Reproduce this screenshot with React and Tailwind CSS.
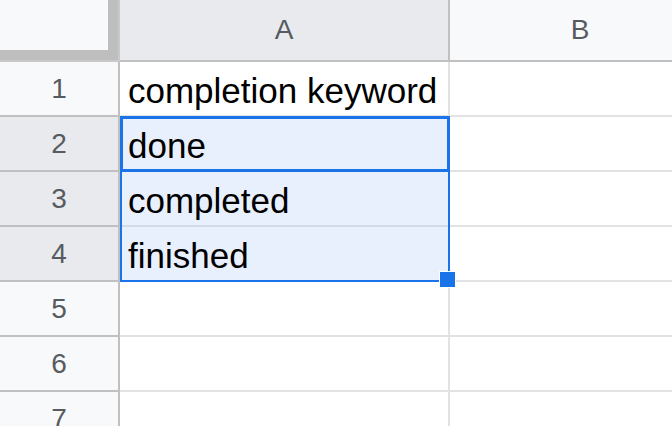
import React from "react";

const rows = [
  { n: 1, a: "completion keyword" },
  { n: 2, a: "done", sel: true },
  { n: 3, a: "completed", sel: true },
  { n: 4, a: "finished", sel: true },
  { n: 5 },
  { n: 6 },
  { n: 7 },
];

function HeaderRow() {
  return (
    <div className="flex h-[62px] shrink-0">
      {/* top-left corner with the freeze handles */}
      <div className="w-[120px] shrink-0 border-r-2 border-b-2 border-[#c9c9c9] bg-[#bebebe]">
        <div className="w-[108px] h-[50px] bg-[#f8f9fa]" />
      </div>
      <div className="w-[330px] shrink-0 border-r-2 border-b-2 border-[#c0c0c0] bg-[#e8eaed] flex items-center justify-center text-[28px] text-[#575b60]">
        A
      </div>
      <div className="w-[260px] shrink-0 border-b-2 border-[#c0c0c0] bg-[#f8f9fa] flex items-center justify-center text-[28px] text-[#575b60]">
        B
      </div>
    </div>
  );
}

function Row({ n, a, sel }) {
  return (
    <div className="flex h-[55px] shrink-0">
      <div
        className={
          sel
            ? "w-[120px] shrink-0 border-r-2 border-b-2 border-[#c0c0c0] bg-[#e8eaed] flex items-center justify-center text-[28px] text-[#575b60]"
            : "w-[120px] shrink-0 border-r-2 border-b-2 border-[#c0c0c0] bg-[#f8f9fa] flex items-center justify-center text-[28px] text-[#575b60]"
        }
      >
        {n}
      </div>
      <div
        className={
          sel
            ? "w-[330px] shrink-0 border-r-2 border-b-2 border-[#d3dae6] bg-[#e8f0fe] flex items-center pl-2 pt-1 text-[35px] text-black"
            : "w-[330px] shrink-0 border-r-2 border-b-2 border-[#e2e2e2] bg-white flex items-center pl-2 pt-1 text-[35px] text-black"
        }
      >
        {a}
      </div>
      <div className="w-[260px] shrink-0 border-b-2 border-[#e2e2e2] bg-white" />
    </div>
  );
}

export default function App() {
  return (
    <div className="relative w-[672px] h-[426px] overflow-hidden bg-white font-['Liberation_Sans',Arial,sans-serif] leading-none">
      <HeaderRow />
      {rows.map((r) => (
        <Row key={r.n} {...r} />
      ))}

      {/* selected range A2:A4 */}
      <div className="absolute left-[120px] top-[116px] w-[330px] h-[166px] border-2 border-[#1a73e8]" />
      {/* active cell A2 */}
      <div className="absolute left-[120px] top-[116px] w-[330px] h-[56px] border-[3px] border-[#1a73e8]" />
      {/* fill handle */}
      <div className="absolute left-[439px] top-[271px] w-[17px] h-[17px] bg-[#1a73e8] border border-white" />
    </div>
  );
}
